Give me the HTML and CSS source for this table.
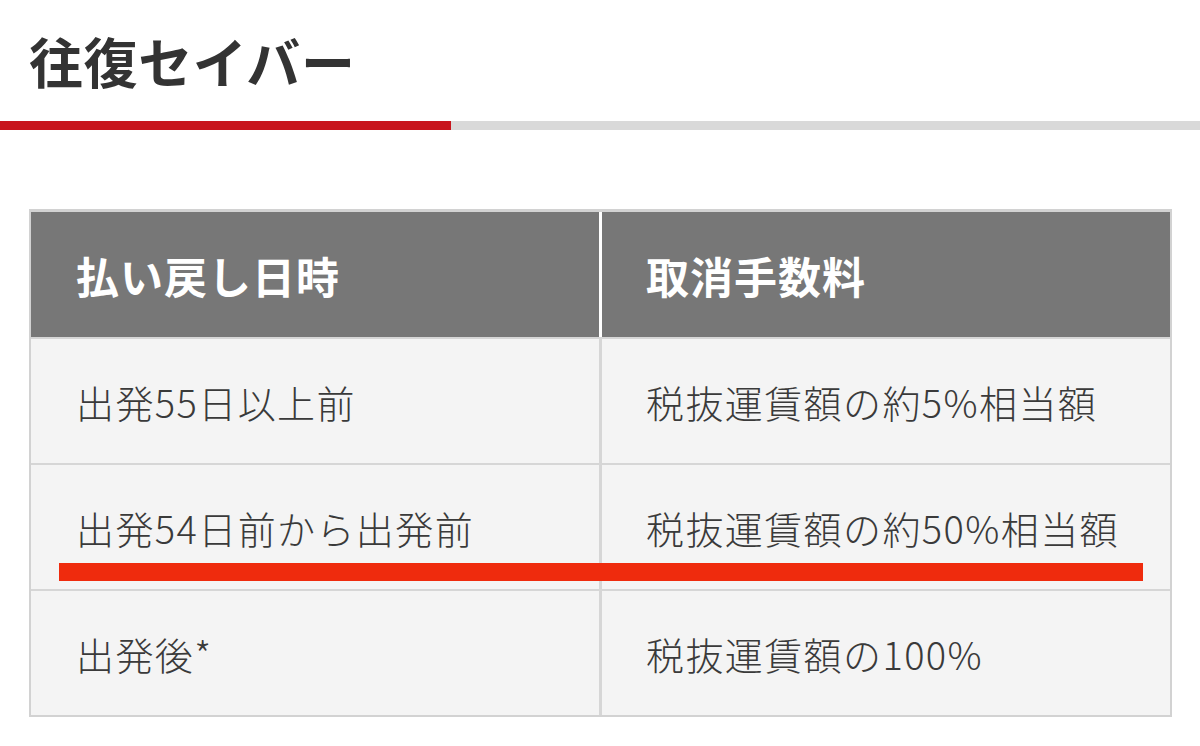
FILE: index.html
```html
<!DOCTYPE html>
<html lang="ja">
<head>
<meta charset="utf-8">
<title>往復セイバー</title>
<link rel="stylesheet" href="styles.css">
</head>
<body>
<h1 class="title">往復セイバー</h1>
<div class="bar"><div class="bar-accent"></div></div>
<div class="table-wrap">
  <table class="fee-table">
    <thead>
      <tr><th class="col-a">払い戻し日時</th><th class="col-b">取消手数料</th></tr>
    </thead>
    <tbody>
      <tr><td class="col-a">出発55日以上前</td><td class="col-b">税抜運賃額の約5%相当額</td></tr>
      <tr><td class="col-a">出発54日前から出発前</td><td class="col-b">税抜運賃額の約50%相当額</td></tr>
      <tr><td class="col-a">出発後*</td><td class="col-b">税抜運賃額の100%</td></tr>
    </tbody>
  </table>
  <div class="highlight"></div>
</div>
</body>
</html>
```

FILE: styles.css
```css
html, body {
  margin: 0;
  padding: 0;
  background: #ffffff;
}
body {
  font-family: "Noto Sans CJK JP", "Noto Sans", sans-serif;
  color: #3a3a3a;
  width: 1200px;
  height: 746px;
  overflow: hidden;
}
.title {
  margin: 0;
  padding: 28px 0 0 29px;
  font-size: 54px;
  line-height: 65px;
  font-weight: 700;
  color: #333333;
  letter-spacing: 0.6px;
}
.bar {
  margin-top: 28px;
  height: 9px;
  background: #d9d9d9;
  display: flex;
}
.bar-accent {
  width: 451px;
  background: #c8151d;
}
.table-wrap {
  position: relative;
  margin: 79px 0 0 29px;
  width: 1143px;
}
.fee-table {
  width: 1143px;
  border-collapse: separate;
  border-spacing: 0;
  border: 2px solid #d2d2d2;
  border-top-width: 3px;
  table-layout: fixed;
}
.fee-table th,
.fee-table td {
  text-align: left;
  vertical-align: middle;
  padding: 0 0 0 44px;
}
.fee-table .col-a {
  width: 523px;
  padding-left: 45px;
}
.fee-table th {
  height: 125px;
  background: #777777;
  color: #ffffff;
  font-size: 43px;
  font-weight: 700;
  letter-spacing: 1px;
}
.fee-table th.col-a {
  border-right: 3px solid #ffffff;
}
.fee-table td {
  height: 124px;
  background: #f4f4f4;
  border-top: 2px solid #d6d6d6;
  font-size: 38px;
  font-weight: 300;
  color: #3a3a3a;
  letter-spacing: 1.4px;
}
.fee-table td.col-a {
  border-right: 3px solid #d6d6d6;
}
.highlight {
  position: absolute;
  left: 30px;
  top: 354px;
  width: 1084px;
  height: 18px;
  background: #ef2b0d;
}
```
